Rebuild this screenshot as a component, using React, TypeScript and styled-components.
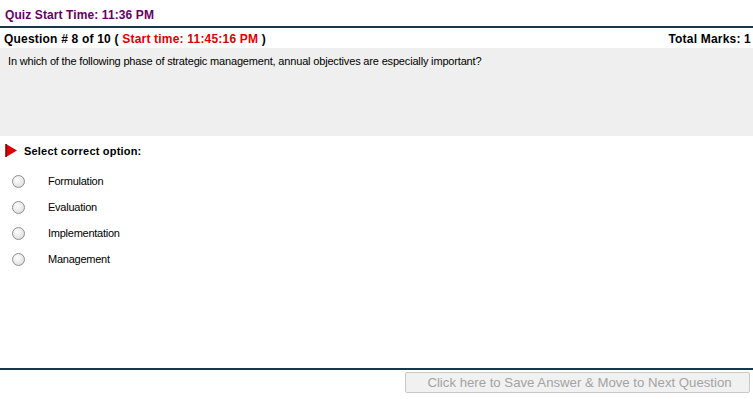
import styled, { createGlobalStyle } from "styled-components";

const GlobalStyle = createGlobalStyle`
  html, body {
    margin: 0;
    padding: 0;
    background: #ffffff;
  }
  body {
    font-family: "Liberation Sans", Arial, sans-serif;
  }
`;

const Page = styled.div`
  width: 753px;
  height: 399px;
  display: flex;
  flex-direction: column;
  overflow: hidden;
`;

const QuizStart = styled.div`
  padding: 8px 0 0 5px;
  height: 18px;
  color: #660066;
  font-size: 12px;
  font-weight: 700;
  line-height: 14px;
  letter-spacing: 0.1px;
`;

const Rule = styled.div`
  height: 2px;
  background: #17374a;
`;

const QuestionBar = styled.div`
  display: flex;
  justify-content: space-between;
  align-items: center;
  height: 18px;
  padding: 2px 2px 0 4px;
  font-size: 12px;
  font-weight: 700;
  color: #000;
  letter-spacing: 0.2px;

  .time {
    color: #e00000;
  }
`;

const QuestionBox = styled.div`
  background: #efefef;
  height: 88px;
  padding: 6px 8px;
  box-sizing: border-box;
  font-size: 11px;
  line-height: 14px;
  letter-spacing: -0.17px;
  color: #000;
`;

const Prompt = styled.div`
  display: flex;
  align-items: center;
  gap: 6px;
  padding: 7px 0 0 5px;
  height: 16px;
  font-size: 11px;
  font-weight: 700;
  letter-spacing: 0.2px;
`;

const Options = styled.div`
  display: flex;
  flex-direction: column;
  padding-top: 9px;
  flex: 1;
`;

const Option = styled.label`
  display: flex;
  align-items: center;
  height: 26px;
  padding-left: 12px;
  font-size: 11px;
  letter-spacing: -0.25px;
  color: #000;
`;

const Radio = styled.span`
  width: 11px;
  height: 11px;
  border-radius: 50%;
  border: 1px solid #8e8f8f;
  background: radial-gradient(circle at 40% 35%, #ffffff 0%, #e6e6e6 60%, #d0d0d0 100%);
  margin-right: 23px;
`;

const Footer = styled.div`
  display: flex;
  flex-direction: column;
  align-items: flex-end;
  padding-bottom: 6px;
`;

const SaveButton = styled.button`
  margin: 2px 3px 0 0;
  width: 345px;
  height: 21px;
  background: #f1f1f1;
  border: 1px solid #c9c9c9;
  border-radius: 2px;
  color: #a3a3a3;
  font-family: "Liberation Sans", Arial, sans-serif;
  font-size: 13.2px;
  padding: 0 0 0 4px;
`;

const Flag = () => (
  <svg width="13" height="14" viewBox="0 0 13 14">
    <path d="M1 0 L12 6.5 L1 13 Z" fill="#e00000" />
    <path d="M1 0 L1 13" stroke="#700000" strokeWidth="1.5" />
  </svg>
);

const options = ["Formulation", "Evaluation", "Implementation", "Management"];

export default function App() {
  return (
    <Page>
      <GlobalStyle />
      <QuizStart>Quiz Start Time: 11:36 PM</QuizStart>
      <Rule />
      <QuestionBar>
        <span>
          Question # 8 of 10 ( <span className="time">Start time: 11:45:16 PM</span> )
        </span>
        <span>Total Marks: 1</span>
      </QuestionBar>
      <QuestionBox>
        In which of the following phase of strategic management, annual objectives are especially important?
      </QuestionBox>
      <Prompt>
        <Flag />
        Select correct option:
      </Prompt>
      <Options>
        {options.map((o) => (
          <Option key={o}>
            <Radio />
            {o}
          </Option>
        ))}
      </Options>
      <Footer>
        <Rule style={{ alignSelf: "stretch" }} />
        <SaveButton>Click here to Save Answer &amp; Move to Next Question</SaveButton>
      </Footer>
    </Page>
  );
}
